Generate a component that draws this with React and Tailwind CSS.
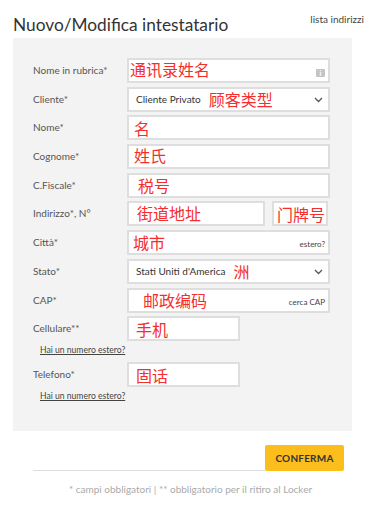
import React from 'react';

const cjk = "text-[#f52d2d] text-[16px] leading-none [font-family:'Noto_Sans_CJK_SC',sans-serif]";

const Label = ({ children }) => (
    <div className="w-[94px] shrink-0 text-[10px] text-[#555]">{children}</div>
);

const Box = ({ className = '', children }) => (
    <div className={`relative flex items-center h-[25px] bg-white border-2 border-[#dedede] ${className}`}>
        {children}
    </div>
);

const Chevron = () => (
    <svg className="absolute right-[5px] top-[8px]" width="9" height="6" viewBox="0 0 9 6" fill="none">
        <path d="M1 1l3.5 3.5L8 1" stroke="#555" strokeWidth="1.3" />
    </svg>
);

const Row = ({ label, children }) => (
    <div className="flex items-center h-[25px]">
        <Label>{label}</Label>
        {children}
    </div>
);

export default function App() {
    return (
        <div className="w-[385px] h-[526px] bg-white font-['Lato',sans-serif] text-[#333]">
            {/* Header */}
            <div className="flex items-end justify-between pl-[13px] pr-[21px] pt-[11px] h-[38px] pb-[5px]">
                <h1 className="text-[17.3px] leading-none font-normal text-[#333]">Nuovo/Modifica intestatario</h1>
                <span className="text-[10px] text-[#444] mb-[6px]">lista indirizzi</span>
            </div>

            {/* Form panel */}
            <div className="ml-[13px] w-[339px] h-[393px] bg-[#f3f3f3] pt-[20px] pl-[20px]">
                <div className="flex flex-col gap-[3.7px]">
                    <Row label="Nome in rubrica*">
                        <Box className="w-[203px]">
                            <span className={`${cjk} pl-[1px] -mt-[4px]`}>通讯录姓名</span>
                            <span className="absolute right-[3px] top-[9px] w-[9px] h-[8px] rounded-[1px] bg-[#c4c4c4] text-white text-[7px] font-bold leading-[8px] text-center">i</span>
                        </Box>
                    </Row>
                    <Row label="Cliente*">
                        <Box className="w-[203px]">
                            <span className="pl-[7px] text-[10px] text-[#333]">Cliente Privato</span>
                            <span className={`${cjk} ml-[8px]`}>顾客类型</span>
                            <Chevron />
                        </Box>
                    </Row>
                    <Row label="Nome*">
                        <Box className="w-[203px]">
                            <span className={`${cjk} pl-[5px]`}>名</span>
                        </Box>
                    </Row>
                    <Row label="Cognome*">
                        <Box className="w-[203px]">
                            <span className={`${cjk} pl-[5px] -mt-[4px]`}>姓氏</span>
                        </Box>
                    </Row>
                    <Row label="C.Fiscale*">
                        <Box className="w-[203px]">
                            <span className={`${cjk} pl-[9px]`}>税号</span>
                        </Box>
                    </Row>
                    <Row label="Indirizzo*, N°">
                        <Box className="w-[138px]">
                            <span className={`${cjk} pl-[8px] -mt-[2px]`}>街道地址</span>
                        </Box>
                        <Box className="w-[56px] ml-[7px]">
                            <span className={`${cjk} pl-[3px]`}>门牌号</span>
                        </Box>
                    </Row>
                    <Row label="Città*">
                        <Box className="w-[203px]">
                            <span className={`${cjk} pl-[4px] -mt-[2px]`}>城市</span>
                            <span className="absolute right-[3px] top-[6px] text-[8px] text-[#444]">estero?</span>
                        </Box>
                    </Row>
                    <Row label="Stato*">
                        <Box className="w-[203px]">
                            <span className="pl-[7px] text-[10px] text-[#333]">Stati Uniti d'America</span>
                            <span className={`${cjk} ml-[8px]`}>洲</span>
                            <Chevron />
                        </Box>
                    </Row>
                    <Row label="CAP*">
                        <Box className="w-[203px]">
                            <span className={`${cjk} pl-[14px]`}>邮政编码</span>
                            <span className="absolute right-[3px] top-[6px] text-[8px] text-[#444]">cerca CAP</span>
                        </Box>
                    </Row>
                    <Row label="Cellulare**">
                        <Box className="w-[113px]">
                            <span className={`${cjk} pl-[7px]`}>手机</span>
                        </Box>
                    </Row>
                </div>
                <a className="block ml-[7px] mt-[4px] text-[8.6px] leading-[10px] text-[#444] underline">Hai un numero estero?</a>
                <div className="mt-[7px]">
                    <Row label="Telefono*">
                        <Box className="w-[113px]">
                            <span className={`${cjk} pl-[7px]`}>固话</span>
                        </Box>
                    </Row>
                </div>
                <a className="block ml-[7px] mt-[4px] text-[8.6px] leading-[10px] text-[#444] underline">Hai un numero estero?</a>
            </div>

            {/* Actions */}
            <div className="flex items-end ml-[33px] mt-[14px]">
                <div className="w-[232px] border-b border-[#ddd]" />
                <button className="w-[79px] h-[26px] rounded-[2px] bg-[#fbbe1d] text-[10px] font-bold text-[#333] tracking-[0.2px]">
                    CONFERMA
                </button>
            </div>
            <p className="mt-[11px] text-center text-[10px] text-[#aaa] pr-[4px]">
                * campi obbligatori | ** obbligatorio per il ritiro al Locker
            </p>
        </div>
    );
}
